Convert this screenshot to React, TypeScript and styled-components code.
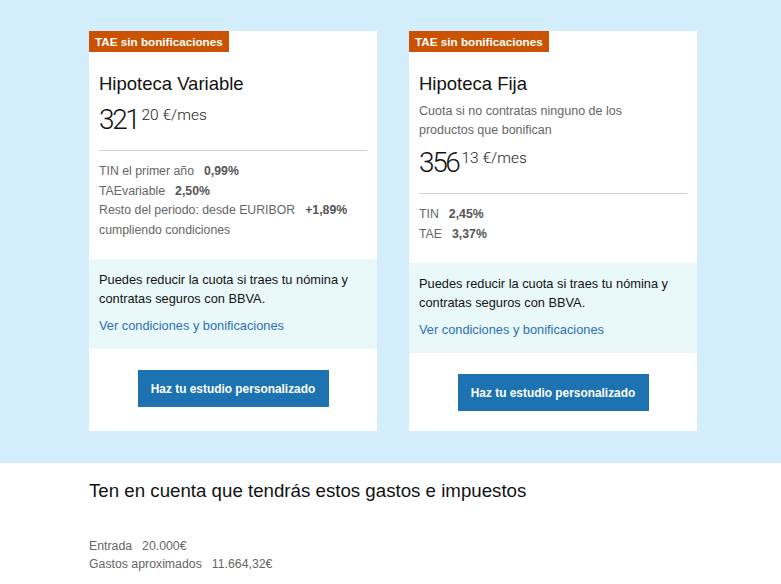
import styled, { createGlobalStyle } from "styled-components";

const GlobalStyle = createGlobalStyle`
  body {
    margin: 0;
    font-family: "Liberation Sans", Arial, sans-serif;
    color: #121212;
    background: #ffffff;
  }
  * {
    box-sizing: border-box;
  }
`;

const Hero = styled.section`
  background: #d4edfc;
  padding: 31px 0 32px 89px;
`;

const CardsRow = styled.div`
  display: flex;
  gap: 32px;
  align-items: stretch;
`;

const Card = styled.article`
  width: 288px;
  background: #ffffff;
  display: flex;
  flex-direction: column;
`;

const Badge = styled.span`
  align-self: flex-start;
  height: 21px;
  line-height: 21px;
  padding: 0 6px;
  background: #c95301;
  color: #ffffff;
  font-size: 11.7px;
  font-weight: 700;
`;

const CardBody = styled.div`
  padding: 20px 10px 19px;
`;

const Title = styled.h2`
  margin: 0;
  font-size: 18.5px;
  line-height: 24px;
  font-weight: 400;
  color: #121212;
`;

const Subtitle = styled.p`
  margin: 6px 0 0;
  max-width: 235px;
  font-size: 12.5px;
  line-height: 19px;
  color: #666666;
`;

const Price = styled.div<{ $gap: number }>`
  margin-top: ${(p) => p.$gap}px;
  display: flex;
  align-items: flex-start;
  height: 32px;
  color: #121212;
`;

const PriceInt = styled.span`
  font-family: Roboto, "Liberation Sans", sans-serif;
  font-weight: 300;
  font-size: 28px;
  line-height: 32px;
  letter-spacing: -2.4px;
`;

const PriceDec = styled.span`
  font-family: Roboto, "Liberation Sans", sans-serif;
  font-weight: 300;
  font-size: 15.5px;
  line-height: 15px;
  margin-top: 4px;
  margin-left: 3px;
  color: #222222;
`;

const Divider = styled.hr`
  border: 0;
  border-top: 1px solid #d3d3d3;
  margin: 14px 0 11px;
`;

const Details = styled.div`
  font-size: 12.3px;
  line-height: 19.5px;
  color: #666666;
`;

const DetailRow = styled.div`
  display: flex;
  flex-wrap: wrap;
`;

const Value = styled.span`
  margin-left: 10px;
  font-weight: 700;
  color: #555555;
`;

const InfoBox = styled.div`
  background: #e9f8f9;
  padding: 11px 10px 14px;
`;

const InfoText = styled.p`
  margin: 0;
  font-size: 12.8px;
  line-height: 19px;
  color: #121212;
`;

const InfoLink = styled.a`
  display: block;
  margin-top: 8px;
  font-size: 12.8px;
  line-height: 19px;
  color: #2d6fb5;
  text-decoration: none;
`;

const Actions = styled.div`
  flex: 1;
  display: flex;
  justify-content: center;
  align-items: flex-start;
  padding: 21px 0 20px;
`;

const CtaButton = styled.button`
  width: 191px;
  height: 37px;
  border: 0;
  background: #1d72b2;
  color: #ffffff;
  font-family: inherit;
  font-size: 11.9px;
  font-weight: 700;
  cursor: pointer;
`;

const Costs = styled.section`
  padding: 17px 89px 20px;
`;

const CostsTitle = styled.h3`
  margin: 0;
  font-size: 18.7px;
  line-height: 22px;
  font-weight: 400;
  color: #121212;
`;

const CostList = styled.div`
  margin-top: 35px;
  font-size: 12.3px;
  line-height: 18px;
  color: #666666;
`;

const CostValue = styled.span`
  margin-left: 10px;
`;

type Detail = { label: string; value: string; note?: string };

type Offer = {
  title: string;
  subtitle?: string;
  whole: string;
  cents: string;
  details: Detail[];
};

const offers: Offer[] = [
  {
    title: "Hipoteca Variable",
    whole: "321",
    cents: "20",
    details: [
      { label: "TIN el primer año", value: "0,99%" },
      { label: "TAEvariable", value: "2,50%" },
      {
        label: "Resto del periodo: desde EURIBOR",
        value: "+1,89%",
        note: "cumpliendo condiciones",
      },
    ],
  },
  {
    title: "Hipoteca Fija",
    subtitle: "Cuota si no contratas ninguno de los productos que bonifican",
    whole: "356",
    cents: "13",
    details: [
      { label: "TIN", value: "2,45%" },
      { label: "TAE", value: "3,37%" },
    ],
  },
];

function OfferCard({ offer }: { offer: Offer }) {
  return (
    <Card>
      <Badge>TAE sin bonificaciones</Badge>
      <CardBody>
        <Title>{offer.title}</Title>
        {offer.subtitle && <Subtitle>{offer.subtitle}</Subtitle>}
        <Price $gap={offer.subtitle ? 7 : 8}>
          <PriceInt>{offer.whole}</PriceInt>
          <PriceDec>{offer.cents} €/mes</PriceDec>
        </Price>
        <Divider />
        <Details>
          {offer.details.map((d) => (
            <div key={d.label}>
              <DetailRow>
                <span>{d.label}</span>
                <Value>{d.value}</Value>
              </DetailRow>
              {d.note && <div>{d.note}</div>}
            </div>
          ))}
        </Details>
      </CardBody>
      <InfoBox>
        <InfoText>
          Puedes reducir la cuota si traes tu nómina y contratas seguros con
          BBVA.
        </InfoText>
        <InfoLink href="#">Ver condiciones y bonificaciones</InfoLink>
      </InfoBox>
      <Actions>
        <CtaButton>Haz tu estudio personalizado</CtaButton>
      </Actions>
    </Card>
  );
}

export default function App() {
  return (
    <>
      <GlobalStyle />
      <Hero>
        <CardsRow>
          {offers.map((o) => (
            <OfferCard key={o.title} offer={o} />
          ))}
        </CardsRow>
      </Hero>
      <Costs>
        <CostsTitle>Ten en cuenta que tendrás estos gastos e impuestos</CostsTitle>
        <CostList>
          <div>
            Entrada<CostValue>20.000€</CostValue>
          </div>
          <div>
            Gastos aproximados<CostValue>11.664,32€</CostValue>
          </div>
        </CostList>
      </Costs>
    </>
  );
}
